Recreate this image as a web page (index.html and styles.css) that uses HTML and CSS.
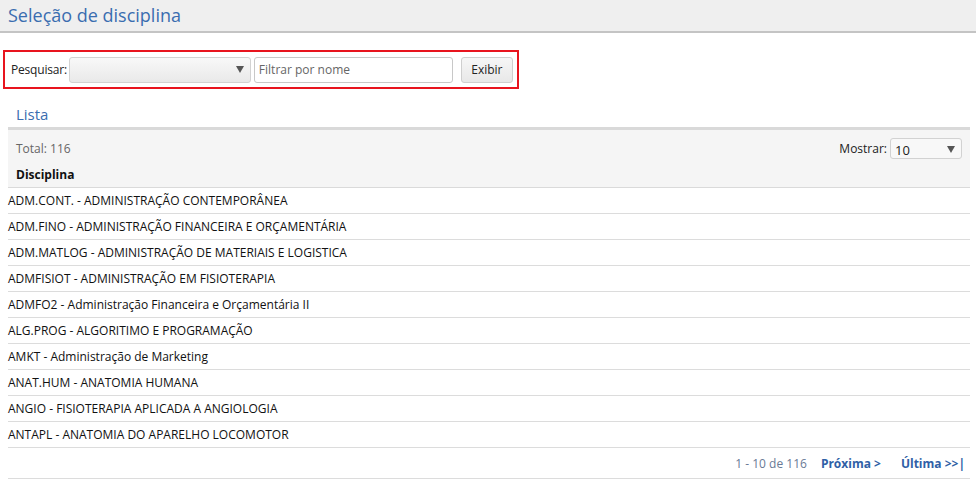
FILE: index.html
```html
<!DOCTYPE html>
<html lang="pt-BR">
<head>
    <meta charset="UTF-8">
    <title>Seleção de disciplina</title>
    <link rel="stylesheet" href="styles.css">
</head>
<body>
    <div class="page-header">
        <h1>Seleção de disciplina</h1>
    </div>

    <form class="search-bar">
        <label for="campo">Pesquisar:</label>
        <div class="select wide" id="campo"><span></span><i class="caret"></i></div>
        <input type="text" class="filter" placeholder="Filtrar por nome">
        <button type="button" class="btn">Exibir</button>
    </form>

    <div class="list-panel">
        <h2>Lista</h2>
        <div class="list-head">
            <div class="list-info">
                <span class="total">Total: 116</span>
                <span class="show">Mostrar: <span class="select small"><span>10</span><i class="caret"></i></span></span>
            </div>
            <div class="col-title">Disciplina</div>
        </div>
        <ul class="rows">
            <li>ADM.CONT. - ADMINISTRAÇÃO CONTEMPORÂNEA</li>
            <li>ADM.FINO - ADMINISTRAÇÃO FINANCEIRA E ORÇAMENTÁRIA</li>
            <li>ADM.MATLOG - ADMINISTRAÇÃO DE MATERIAIS E LOGISTICA</li>
            <li>ADMFISIOT - ADMINISTRAÇÃO EM FISIOTERAPIA</li>
            <li>ADMFO2 - Administração Financeira e Orçamentária II</li>
            <li>ALG.PROG - ALGORITIMO E PROGRAMAÇÃO</li>
            <li>AMKT - Administração de Marketing</li>
            <li>ANAT.HUM - ANATOMIA HUMANA</li>
            <li>ANGIO - FISIOTERAPIA APLICADA A ANGIOLOGIA</li>
            <li>ANTAPL - ANATOMIA DO APARELHO LOCOMOTOR</li>
        </ul>
        <div class="pager">
            <span class="range">1 - 10 de 116</span>
            <a href="#">Próxima &gt;</a>
            <a href="#" class="last">Última &gt;&gt;|</a>
        </div>
    </div>
</body>
</html>
```

FILE: styles.css
```css
html, body {
    margin: 0;
    padding: 0;
}

body {
    font-family: 'Open Sans', 'Noto Sans', sans-serif;
    font-size: 12px;
    color: #111;
    background: #fff;
}

.page-header {
    background: #efefef;
    border-bottom: 2px solid #c4c4c4;
    height: 31px;
    padding: 0 8px;
}

.page-header h1 {
    margin: 0;
    font-weight: normal;
    font-size: 18px;
    line-height: 31px;
    color: #3a6db0;
}

.search-bar {
    display: flex;
    align-items: center;
    width: 502px;
    height: 35px;
    margin: 17px 0 0 3px;
    padding: 0 4px 0 6px;
    border: 2px solid #e8141e;
    box-sizing: content-box;
}

.search-bar label {
    color: #222;
    margin-right: 2px;
    letter-spacing: -0.2px;
}

.select {
    display: inline-flex;
    align-items: center;
    justify-content: space-between;
    box-sizing: border-box;
    border: 1px solid #d2d2d2;
    border-radius: 3px;
    background: linear-gradient(#f8f8f8, #e9e9e9);
    padding: 0 6px 0 4px;
}

.select.wide {
    width: 182px;
    height: 26px;
}

.caret {
    width: 0;
    height: 0;
    border-left: 4px solid transparent;
    border-right: 4px solid transparent;
    border-top: 7px solid #555;
}

.filter {
    width: 199px;
    height: 26px;
    box-sizing: border-box;
    margin-left: 3px;
    border: 1px solid #c8c8c8;
    border-radius: 3px;
    padding: 0 4px;
    font-family: inherit;
    font-size: 12px;
}

.filter::placeholder {
    color: #666;
}

.btn {
    margin-left: 8px;
    height: 26px;
    width: 52px;
    border: 1px solid #cfcfcf;
    border-radius: 3px;
    background: linear-gradient(#f6f6f6, #e8e8e8);
    font-family: inherit;
    font-size: 12px;
    color: #222;
    padding: 0;
}

.list-panel {
    margin: 12px 6px 0 8px;
}

.list-panel h2 {
    margin: 0;
    padding-left: 8px;
    font-weight: normal;
    font-size: 15px;
    line-height: 26px;
    color: #3a6db0;
    border-bottom: 3px solid #d9d9d9;
}

.list-head {
    background: #f5f5f5;
    padding: 0 8px;
    border-bottom: 1px solid #dadada;
    height: 57px;
}

.list-info {
    display: flex;
    justify-content: space-between;
    align-items: center;
    height: 36px;
}

.total {
    color: #666;
}

.show {
    display: flex;
    align-items: center;
    color: #222;
}

.select.small {
    width: 72px;
    height: 21px;
    margin-left: 3px;
    background: #f8f8f8;
    font-size: 13px;
    padding-top: 3px;
}

.col-title {
    font-weight: bold;
    line-height: 14px;
    padding-top: 2px;
}

.rows {
    list-style: none;
    margin: 0;
    padding: 0;
}

.rows li {
    height: 25px;
    line-height: 25px;
    border-bottom: 1px solid #dcdcdc;
    color: #111;
}

.pager {
    display: flex;
    justify-content: flex-end;
    align-items: center;
    height: 30px;
    padding-right: 5px;
    border-bottom: 1px solid #dcdcdc;
}

.pager .range {
    color: #6a7a96;
}

.pager a {
    margin-left: 14px;
    color: #2f5fa6;
    font-weight: bold;
    text-decoration: none;
}

.pager a.last {
    margin-left: 20px;
}
```
